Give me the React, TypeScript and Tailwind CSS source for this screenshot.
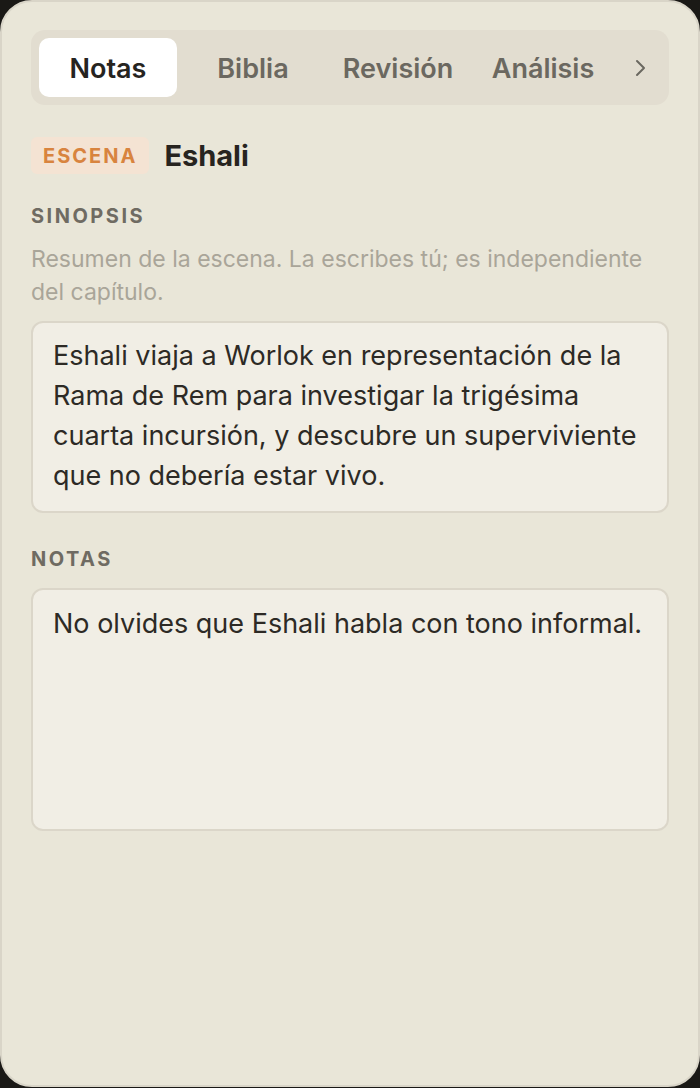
import React from "react";

export default function App() {
  const tabs = ["Notas", "Biblia", "Revisión", "Análisis"];
  return (
    <div
      className="w-[700px] h-[1088px] bg-[#1a1916] overflow-hidden"
      style={{ fontFamily: "Inter, 'Noto Sans', sans-serif" }}
    >
      <div className="h-[1087px] w-full rounded-[32px] border-2 border-[#d9d5c8] bg-[#e9e6d8] px-[29px] pt-[28px] flex flex-col">
        <div className="flex items-center gap-[7px] rounded-[14px] bg-[#e2ddd0] p-2">
          {tabs.map((t, i) => (
            <div
              key={t}
              className={
                i === 0
                  ? "w-[138px] h-[59px] pt-[3px] flex items-center justify-center rounded-[10px] bg-white text-[27px] font-semibold text-[#26241f]"
                  : "w-[138px] h-[59px] pt-[3px] flex items-center justify-center rounded-[10px] text-[27px] font-semibold text-[#6b6860]"
              }
            >
              {t}
            </div>
          ))}
          <div className="flex-1 h-[59px] flex items-center justify-center text-[#6b6860]">
            <svg width="14" height="20" viewBox="0 0 14 20" fill="none">
              <path d="M4 3l7 7-7 7" stroke="currentColor" strokeWidth="2" strokeLinecap="round" strokeLinejoin="round" />
            </svg>
          </div>
        </div>

        <div className="mt-[29px] flex items-center gap-[15px]">
          <span className="rounded-[6px] bg-[#f4e3d3] px-[12px] h-[37px] flex items-center text-[20px] font-bold tracking-[2px] text-[#d8843f]">
            ESCENA
          </span>
          <span className="text-[29px] font-bold text-[#27241f]">Eshali</span>
        </div>

        <div className="mt-[23px] text-[20px] font-bold tracking-[2.5px] text-[#6f6b62]">SINOPSIS</div>
        <p className="mt-[12px] text-[23px] leading-[33px] text-[#a9a599]">
          Resumen de la escena. La escribes tú; es independiente del capítulo.
        </p>
        <div className="mt-[12px] rounded-[12px] border-2 border-[#dbd6c9] bg-[#f1eee5] px-[20px] pt-[13px] pb-[15px] text-[27px] leading-[40px] text-[#2d2a25]">
          Eshali viaja a Worlok en representación de la Rama de Rem para investigar la trigésima cuarta incursión, y descubre un superviviente que no debería estar vivo.
        </div>

        <div className="mt-[31px] text-[20px] font-bold tracking-[2.5px] text-[#6f6b62]">NOTAS</div>
        <div className="mt-[14px] h-[243px] rounded-[12px] border-2 border-[#dbd6c9] bg-[#f1eee5] px-[20px] pt-[14px] text-[27px] leading-[40px] text-[#2d2a25]">
          No olvides que Eshali habla con tono informal.
        </div>
      </div>
    </div>
  );
}
